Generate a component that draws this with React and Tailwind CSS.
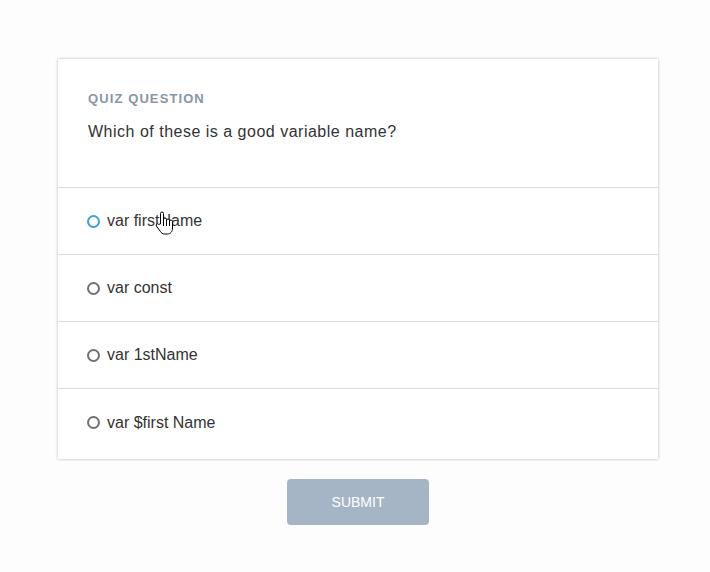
import React from 'react';

const options = ['var firstName', 'var const', 'var 1stName', 'var $first Name'];

const HandCursor = () => (
  <svg
    className="pointer-events-none absolute left-[155px] top-[211px]"
    width="19"
    height="25"
    viewBox="0 0 19 25"
  >
    <path
      d="M5.5 13 V2.5 a1.5 1.5 0 0 1 3 0 V10 V8.5 a1.5 1.5 0 0 1 3 0 V10.5 V9.5 a1.5 1.5 0 0 1 3 0 V11 V10.5 a1.5 1.5 0 0 1 3 0 V17 c0 3.5 -2 6 -5 6 H9.5 c-2 0 -3.2 -1 -4.3 -2.8 L1.4 15 a1.4 1.4 0 0 1 2.2 -1.7 Z"
      fill="#fff"
      stroke="#000"
      strokeWidth="1"
      strokeLinejoin="round"
    />
    <path d="M8.5 10 V15 M11.5 10.5 V15 M14.5 11 V15" stroke="#000" strokeWidth="1" />
  </svg>
);

const Option = ({ label, active, last }) => (
  <label
    className={`flex cursor-pointer items-center gap-[7px] pl-[29px] ${
      last ? 'h-[70px] pb-[3px]' : 'h-[67px] border-b border-[#dcdcdc]'
    }`}
  >
    <span
      className={`box-border h-[13px] w-[13px] rounded-full border-2 ${
        active ? 'border-[#3ba0dc]' : 'border-[#707070]'
      }`}
    />
    <span className="text-[16px] text-[#333]">{label}</span>
  </label>
);

export default function App() {
  return (
    <div
      className="relative flex min-h-[572px] flex-col items-center bg-[#fdfdfd] pl-[6px] pt-[59px]"
      style={{ fontFamily: '"Liberation Sans", Arial, sans-serif' }}
    >
      <div className="w-[600px] bg-white shadow-[0_0_3px_rgba(0,0,0,0.28)]">
        <div className="h-[129px] border-b border-[#dcdcdc] px-[30px] pt-[30px]">
          <div className="text-[13px] font-bold tracking-[1.1px] text-[#8796a5]">QUIZ QUESTION</div>
          <div className="mt-[11px] text-[16px] tracking-[0.5px] text-[#333]">
            Which of these is a good variable name?
          </div>
        </div>
        {options.map((o, i) => (
          <Option key={o} label={o} active={i === 0} last={i === options.length - 1} />
        ))}
      </div>
      <button className="mt-[20px] h-[46px] w-[142px] rounded-[4px] bg-[#a6b5c6] text-[14px] text-white">
        SUBMIT
      </button>
      <HandCursor />
    </div>
  );
}
